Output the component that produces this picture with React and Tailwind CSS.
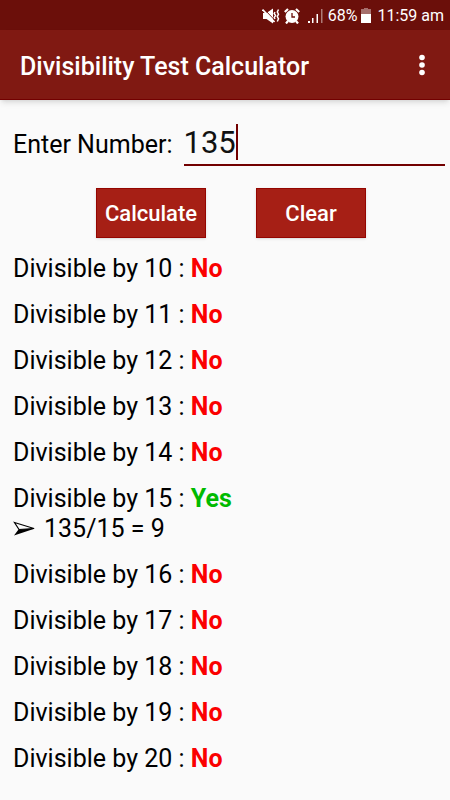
import React, { useState } from 'react'

const results = [
  { divisor: 10 },
  { divisor: 11 },
  { divisor: 12 },
  { divisor: 13 },
  { divisor: 14 },
  { divisor: 15, quotient: '135/15 = 9' },
  { divisor: 16 },
  { divisor: 17 },
  { divisor: 18 },
  { divisor: 19 },
  { divisor: 20 },
]

function MuteIcon() {
  return (
    <svg width="18" height="18" viewBox="0 0 18 18" fill="none" aria-hidden="true">
      <path d="M1 6h3.500L11 1.500v15L4.500 12H1z" fill="#fff" />
      <path d="M2 2l11 11.500" stroke="#6b0f0a" strokeWidth="1" />
      <path d="M0.500 2.500l12 12.500" stroke="#fff" strokeWidth="1.800" />
      <path d="M13 5l-0.800 1.500 1.300 2-1.300 2 0.800 1.500M16.500 2.500L15.300 5l1.200 2.200-1.200 2.300 1.200 2.300-1.200 2.700" stroke="#fff" strokeWidth="1.500" />
    </svg>
  )
}

function AlarmIcon() {
  return (
    <svg width="16" height="16" viewBox="0 0 16 16" fill="none" aria-hidden="true">
      <path d="M0.800 4L4 1M15.200 4L12 1M4 13l-2 2.500M12 13l2 2.500" stroke="#fff" strokeWidth="2.200" />
      <circle cx="8" cy="8.500" r="6.500" fill="#fff" />
      <path d="M8 5v4h3" stroke="#6b0f0a" strokeWidth="1.300" />
    </svg>
  )
}

function SignalIcon() {
  return (
    <svg width="16" height="16" viewBox="0 0 16 16" fill="#fff" aria-hidden="true">
      <rect x="0" y="13" width="2" height="2" />
      <rect x="4" y="10" width="1.500" height="5" />
      <rect x="8.500" y="6" width="1.500" height="9" />
      <rect x="13" y="1" width="1.500" height="14" opacity="0.45" />
    </svg>
  )
}

function BatteryIcon() {
  return (
    <svg width="10" height="16" viewBox="0 0 10 16" fill="#fff" aria-hidden="true">
      <path d="M3 0h4v1h3v5H0V1h3z" opacity="0.4" />
      <rect y="6" width="10" height="9" />
    </svg>
  )
}

function ArrowheadIcon() {
  return (
    <svg width="23" height="16" viewBox="0 0 23 16" aria-hidden="true">
      <path d="M1.500 1.500L21 7.500 6 8.500z" fill="none" stroke="#000" strokeWidth="1.200" />
      <path d="M5.500 8.500L22 7.500 1 14.500z" fill="#000" />
    </svg>
  )
}

function StatusBar() {
  return (
    <div className="flex h-[30px] items-center justify-end bg-[#6b0f0a] pt-0.5 pr-1.5 text-[16px] leading-6 text-white">
      <MuteIcon />
      <span className="ml-1"><AlarmIcon /></span>
      <span className="ml-2"><SignalIcon /></span>
      <span className="ml-1">68%</span>
      <span className="ml-1"><BatteryIcon /></span>
      <span className="ml-1.5">11:59 am</span>
    </div>
  )
}

export default function App() {
  const [number, setNumber] = useState('135')

  return (
    <div className="min-h-screen bg-[#fafafa] font-['Roboto',sans-serif] text-black">
      <StatusBar />
      <header className="flex h-[70px] items-center justify-between border-b border-[#720000] bg-[#801912] pr-5 pl-5 text-white shadow-md">
        <h1 className="pt-1 text-[25px] leading-8 font-medium">Divisibility Test Calculator</h1>
        <button type="button" aria-label="More options" className="flex w-4 justify-center">
          <svg width="6" height="22" viewBox="0 0 6 22" fill="#fff" aria-hidden="true">
            <circle cx="3" cy="3.500" r="2.800" />
            <circle cx="3" cy="11" r="2.800" />
            <circle cx="3" cy="18.500" r="2.800" />
          </svg>
        </button>
      </header>

      <main className="pt-5 pr-[5px] pl-[13px] text-[25px] leading-[30px]">
        <div className="flex items-center">
          <label htmlFor="number" className="pt-1">Enter Number:</label>
          <div className="relative ml-[11px] min-w-0 flex-1">
            <input
              id="number"
              type="text"
              inputMode="numeric"
              value={number}
              onChange={(e) => setNumber(e.target.value)}
              className="block h-[46px] w-full border-b-2 border-[#720000] bg-transparent text-[31px] text-[#111] outline-none"
            />
            <span className="absolute top-1 left-[52px] h-9 w-0.5 bg-[#720000]" />
          </div>
        </div>

        <div className="mt-[22px] flex justify-center gap-[50px] pl-1">
          <button type="button" className="h-[50px] w-[110px] border border-[#940500] bg-[#a61f15] pt-0.5 text-[22px] font-medium text-white shadow-sm">
            Calculate
          </button>
          <button type="button" onClick={() => setNumber('')} className="h-[50px] w-[110px] border border-[#940500] bg-[#a61f15] pt-0.5 text-[22px] font-medium text-white shadow-sm">
            Clear
          </button>
        </div>

        <ul className="mt-4 flex flex-col gap-4">
          {results.map(({ divisor, quotient }) => (
            <li key={divisor}>
              Divisible by {divisor} :{' '}
              <b className={quotient ? 'text-[#00ba00]' : 'text-[#fa0000]'}>{quotient ? 'Yes' : 'No'}</b>
              {quotient && (
                <div className="flex items-center gap-2">
                  <ArrowheadIcon />
                  {quotient}
                </div>
              )}
            </li>
          ))}
        </ul>
      </main>
    </div>
  )
}
